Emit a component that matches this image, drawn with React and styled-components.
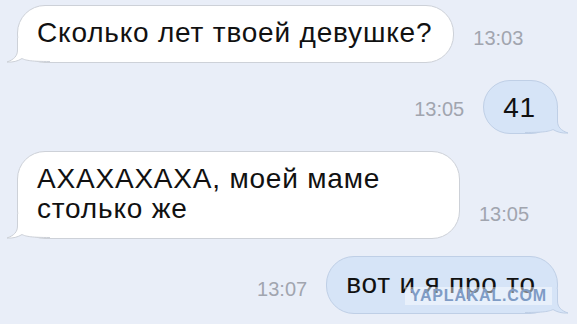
import React from "react";
import styled, { createGlobalStyle } from "styled-components";

const messages = [
  { id: 1, out: false, text: "Сколько лет твоей девушке?", time: "13:03" },
  { id: 2, out: true, text: "41", time: "13:05", compact: true },
  { id: 3, out: false, text: "АХАХАХАХА, моей маме столько же", time: "13:05" },
  { id: 4, out: true, text: "вот и я про то", time: "13:07" },
];

const Tail = ({ out }) => (
  <TailSvg out={out} width="44" height="26" viewBox="0 0 44 26">
    <path
      d="M11.5 0 L11.5 12 C11.5 18 8 21.5 1 24 C7 24.5 12 23 16 20.5 C20 22.5 26 23.5 44 23.5 L44 0 Z"
      fill={out ? "#d6e4f7" : "#ffffff"}
    />
    <path
      d="M11.5 0 L11.5 12 C11.5 18 8 21.5 1 24 C7 24.5 12 23 16 20.5 C20 22.5 26 23.5 44 23.5"
      fill="none"
      stroke={out ? "#bfcfe6" : "#cdd1d8"}
      strokeWidth="1"
    />
  </TailSvg>
);

const App = () => {
  return (
    <>
      <GlobalStyle />
      <Screen>
        {messages.map((m) => (
          <Row key={m.id} out={m.out}>
            {m.out && <Time>{m.time}</Time>}
            <Bubble out={m.out} compact={m.compact}>
              <Tail out={m.out} />
              <BubbleText>{m.text}</BubbleText>
            </Bubble>
            {!m.out && <Time>{m.time}</Time>}
          </Row>
        ))}
        <Watermark>YAPLAKAL.COM</Watermark>
      </Screen>
    </>
  );
};

export default App;

const GlobalStyle = createGlobalStyle`
  html, body {
    margin: 0;
    padding: 0;
    background: #e9eef8;
  }
  body {
    font-family: "Liberation Sans", Arial, sans-serif;
  }
`;

const Screen = styled.div`
  position: relative;
  width: 577px;
  height: 324px;
  overflow: hidden;
  background: #e9eef8;
  padding-top: 5px;
  box-sizing: border-box;
  display: flex;
  flex-direction: column;
  gap: 17px;
`;

const Row = styled.div`
  display: flex;
  align-items: flex-end;
  justify-content: ${(props) => (props.out ? "flex-end" : "flex-start")};
  gap: 19px;
  padding: ${(props) => (props.out ? "0 19px 0 0" : "0 0 0 17px")};
`;

const Bubble = styled.div`
  position: relative;
  max-width: 443px;
  box-sizing: border-box;
  padding: ${(props) => (props.compact ? "12px 21px 10px 19px" : "12px 21px 14px 19px")};
  border-radius: 28px;
  background: ${(props) => (props.out ? "#d6e4f7" : "#ffffff")};
  border: 1px solid ${(props) => (props.out ? "#bfcfe6" : "#cdd1d8")};
`;

const TailSvg = styled.svg`
  position: absolute;
  bottom: -2px;
  ${(props) => (props.out ? "right: -12px;" : "left: -12px;")}
  transform: ${(props) => (props.out ? "scaleX(-1)" : "none")};
  overflow: visible;
`;

const BubbleText = styled.div`
  position: relative;
  font-size: 28px;
  line-height: 30px;
  letter-spacing: 0.8px;
  color: #111;
`;

const Time = styled.div`
  font-size: 20px;
  line-height: 20px;
  color: #a1a5af;
  margin-bottom: 15px;
  white-space: nowrap;
`;

const Watermark = styled.div`
  position: absolute;
  left: 405px;
  top: 287px;
  width: 147px;
  height: 18px;
  display: flex;
  align-items: center;
  justify-content: center;
  background: rgba(255, 255, 255, 0.45);
  color: #7f9cc6;
  font-family: "Liberation Sans", Arial, sans-serif;
  font-weight: 700;
  font-size: 16px;
  letter-spacing: 0.8px;
  white-space: nowrap;
`;
